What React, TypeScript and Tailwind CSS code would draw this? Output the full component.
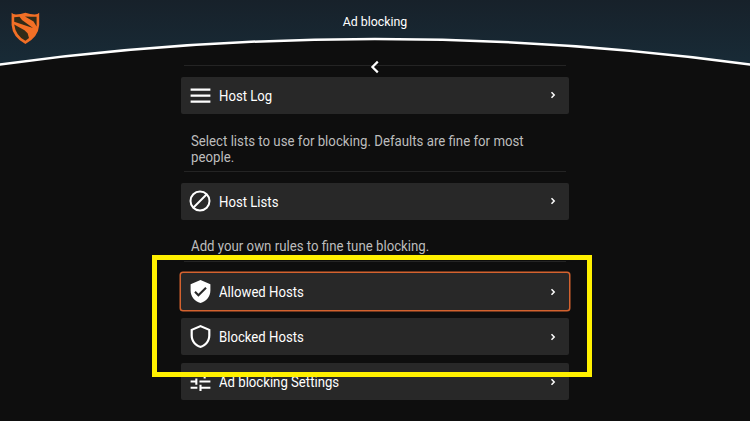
import type { ReactNode } from "react";

function Row({ label, icon, focused = false }: { label: string; icon: ReactNode; focused?: boolean }) {
  return (
    <button
      className={
        "flex h-[37px] w-[388px] shrink-0 items-center rounded-[2px] bg-[#282828] pl-[7px] pr-[11px] text-left text-[14px] text-white " +
        (focused ? "ring-[1.5px] ring-[#d4622f]" : "")
      }
    >
      <span className="flex size-6 items-center justify-center">{icon}</span>
      <span className="ml-[7px] mt-px grow origin-left scale-x-[0.94] leading-none">{label}</span>
      <svg className="h-[10px] w-[10px]" viewBox="0 0 10 10" fill="none" stroke="#fff" strokeWidth="1.5">
        <path d="M3.5 2.3 6.2 5 3.5 7.7" />
      </svg>
    </button>
  );
}

function Icon({ d }: { d: string }) {
  return (
    <svg className="size-[25px] shrink-0" viewBox="0 0 24 24" fill="#fff">
      <path d={d} />
    </svg>
  );
}

function Divider() {
  return <div className="ml-[3px] h-px w-[382px] shrink-0 bg-[#242424]" />;
}

export default function App() {
  return (
    <div className="relative h-[421px] w-[750px] overflow-hidden bg-[#0e0e0e] font-['Roboto',sans-serif]">
      <header className="relative h-[65px]">
        <svg className="absolute inset-0 h-[68px] w-[750px]" viewBox="0 0 750 68">
          <defs>
            <linearGradient id="sky" x1="0" y1="0" x2="0" y2="1">
              <stop offset="0" stopColor="#17212a" />
              <stop offset="1" stopColor="#182b37" />
            </linearGradient>
          </defs>
          <path d="M0 0H750V64.5Q375 13.5 0 64.5Z" fill="url(#sky)" />
          <path d="M-2 64.7Q375 13.3 752 64.7" fill="none" stroke="#fff" strokeWidth="2.5" />
        </svg>
        <svg className="absolute left-[10px] top-[12px] h-[32px] w-[31px]" viewBox="0 0 31 32">
          <path d="M1.6 0.8Q3 2.4 6 2.4Q10.5 2.4 15.4 0.8Q20.3 2.4 24.8 2.4Q27.8 2.4 29.2 0.8V13Q28.4 25 15.4 32Q2.4 25 1.6 13Z" fill="#f26f26" />
          <path d="M15 4.4 21 4.8 26.6 4.8V14.6L23.6 9.6ZM4.2 5.2 9.5 4.8 12 8 23 16 4.2 9.8ZM4.2 12.4 14.5 18.2 17.6 21.2 19 26 15.4 28.8Q5.6 23.4 4.2 12.4Z" fill="#302b18" />
        </svg>
        <h1 className="relative scale-x-[0.95] pt-[15px] text-center text-[13px] leading-[14px] text-white">Ad blocking</h1>
      </header>
      <main className="ml-[181px] flex w-[388px] flex-col">
        <Divider />
        <div className="h-[10.5px] shrink-0" />
        <Row label="Host Log" icon={<Icon d="M2.5 5.2h19v2.2h-19zM2.5 11h19v2.2h-19zM2.5 16.8h19v2.2h-19z" />} />
        <p className="mb-[6px] ml-[10px] mt-[19.5px] w-[370px] origin-left scale-x-[0.945] text-[14px] leading-[16px] text-[#bdbdbd]">
          Select lists to use for blocking. Defaults are fine for most<br />people.
        </p>
        <Divider />
        <div className="h-[10.5px] shrink-0" />
        <Row label="Host Lists" icon={<svg className="size-[22px]" viewBox="0 0 22 22" fill="none" stroke="#fff" strokeWidth="2"><circle cx="11" cy="11" r="9.5" /><path d="M17.5 4.5 4.5 17.5" /></svg>} />
        <p className="mb-[7px] ml-[10px] mt-[18.5px] origin-left scale-x-[0.945] text-[14px] leading-[16px] text-[#bdbdbd]">
          Add your own rules to fine tune blocking.
        </p>
        <Divider />
        <div className="h-[11px] shrink-0" />
        <Row focused label="Allowed Hosts" icon={<Icon d="M12 1 2.5 5v6c0 5.55 4.06 10.74 9.5 12 5.44-1.26 9.5-6.45 9.5-12V5Zm-2 16-4-4 1.4-1.4 2.6 2.6 6.6-6.6L18 9Z" />} />
        <div className="h-[8px] shrink-0" />
        <Row label="Blocked Hosts" icon={<Icon d="M12 1 2.5 5v6c0 5.55 4.06 10.74 9.5 12 5.44-1.26 9.5-6.45 9.5-12V5Zm7.4 10c0 4.52-3.18 8.69-7.4 9.93-4.22-1.24-7.4-5.41-7.4-9.93V6.3L12 3.18l7.4 3.12Z" />} />
        <div className="h-[8px] shrink-0" />
        <Row label="Ad blocking Settings" icon={<Icon d="M2.5 17v2H9v-2Zm0-12v2H13V5ZM13 21v-2h8.5v-2H13v-2h-2v6ZM7 9v2H2.5v2H7v2h2V9Zm14.5 4v-2H11v2ZM15 9h2V7h4.5V5H17V3h-2Z" />} />
      </main>
      <div className="absolute left-[367px] top-[59px] flex size-4 items-center justify-center">
        <svg className="size-4" viewBox="0 0 16 16" fill="none" stroke="#fff" strokeWidth="2.2">
          <path d="M10.8 2.6 5.4 8l5.4 5.4" />
        </svg>
      </div>
      <div className="absolute left-[152px] top-[255px] h-[122px] w-[440px] border-[5px] border-[#fff000]" />
    </div>
  );
}
